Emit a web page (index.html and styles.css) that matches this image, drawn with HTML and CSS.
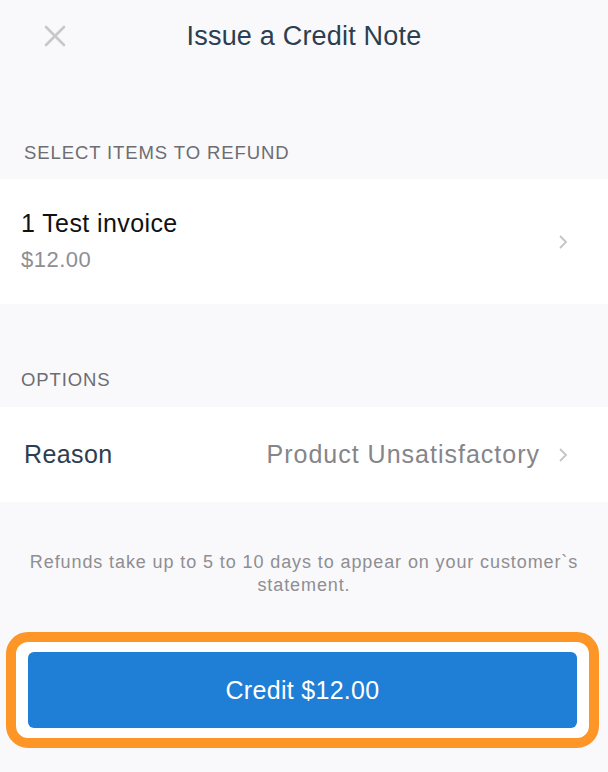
FILE: index.html
```html
<!DOCTYPE html>
<html>
<head>
  <title>Issue a Credit Note</title>
  <link rel="stylesheet" href="styles.css">
</head>
<body>
  <div class="screen">
    <div class="topbar">
      <div class="close">
        <svg width="22" height="22" viewBox="0 0 22 22"><path d="M2 2 L20 20 M20 2 L2 20" stroke="#c8c8cc" stroke-width="2.6" stroke-linecap="round"/></svg>
      </div>
      <h1 class="title">Issue a Credit Note</h1>
      <div></div>
    </div>

    <div class="group-label">SELECT ITEMS TO REFUND</div>
    <div class="card item-card">
      <div class="item-text">
        <div class="item-name">1 Test invoice</div>
        <div class="item-price">$12.00</div>
      </div>
      <svg class="chevron" width="10" height="16" viewBox="0 0 10 16"><path d="M2 2 L8 8 L2 14" fill="none" stroke="#c4c4c8" stroke-width="1.8"/></svg>
    </div>

    <div class="group-label options-label">OPTIONS</div>
    <div class="card reason-card">
      <div class="reason-label">Reason</div>
      <div class="reason-value">Product Unsatisfactory</div>
      <svg class="chevron" width="10" height="16" viewBox="0 0 10 16"><path d="M2 2 L8 8 L2 14" fill="none" stroke="#c4c4c8" stroke-width="1.8"/></svg>
    </div>

    <p class="note">Refunds take up to 5 to 10 days to appear on your customer`s statement.</p>

    <div class="highlight">
      <button class="credit-btn">Credit $12.00</button>
    </div>
  </div>
</body>
</html>
```

FILE: styles.css
```css
body {
  margin: 0;
  background-color: #f9f9fb;
  font-family: 'Liberation Sans', Arial, sans-serif;
}

.screen {
  width: 608px;
  height: 772px;
  overflow: hidden;
}

.topbar {
  height: 72px;
  display: grid;
  grid-template-columns: 1fr auto 1fr;
  align-items: center;
}

.close {
  padding-left: 44px;
  display: flex;
  align-items: center;
}

.title {
  margin: 0;
  font-size: 27px;
  font-weight: normal;
  letter-spacing: 0.2px;
  color: #2c3e50;
  line-height: 30px;
}

.group-label {
  font-size: 18.5px;
  line-height: 22px;
  letter-spacing: 0.9px;
  color: #6d6d72;
  padding: 70px 0 15px 24px;
}

.options-label {
  padding: 65px 0 16px 21px;
}

.card {
  background-color: #fff;
  display: flex;
  align-items: center;
  padding: 0 40px 0 21px;
}

.item-card {
  height: 125px;
}

.item-text {
  flex: 1;
}

.item-name {
  font-size: 25px;
  line-height: 30px;
  letter-spacing: 0.4px;
  color: #111;
}

.item-price {
  margin-top: 7px;
  font-size: 22px;
  line-height: 30px;
  letter-spacing: 0.5px;
  color: #8e8e93;
}

.reason-card {
  height: 95px;
  padding-left: 24px;
}

.reason-label {
  flex: 1;
  font-size: 25px;
  letter-spacing: 0.4px;
  color: #2c3e50;
}

.reason-value {
  font-size: 25px;
  letter-spacing: 1px;
  color: #85858a;
  margin-right: 18px;
}

.note {
  margin: 49px 20px 0;
  text-align: center;
  font-size: 18px;
  line-height: 23px;
  letter-spacing: 0.9px;
  color: #8e8e93;
}

.highlight {
  margin: 35px 9px 0 6px;
  border: 10px solid #fd9527;
  border-radius: 22px;
  background-color: #fff;
  padding: 10px 12px;
}

.credit-btn {
  display: block;
  width: 100%;
  height: 76px;
  border: none;
  border-radius: 6px;
  background-color: #1f7ed5;
  color: #fff;
  font-family: 'Liberation Sans', Arial, sans-serif;
  font-size: 25px;
  letter-spacing: 0.3px;
}
```
